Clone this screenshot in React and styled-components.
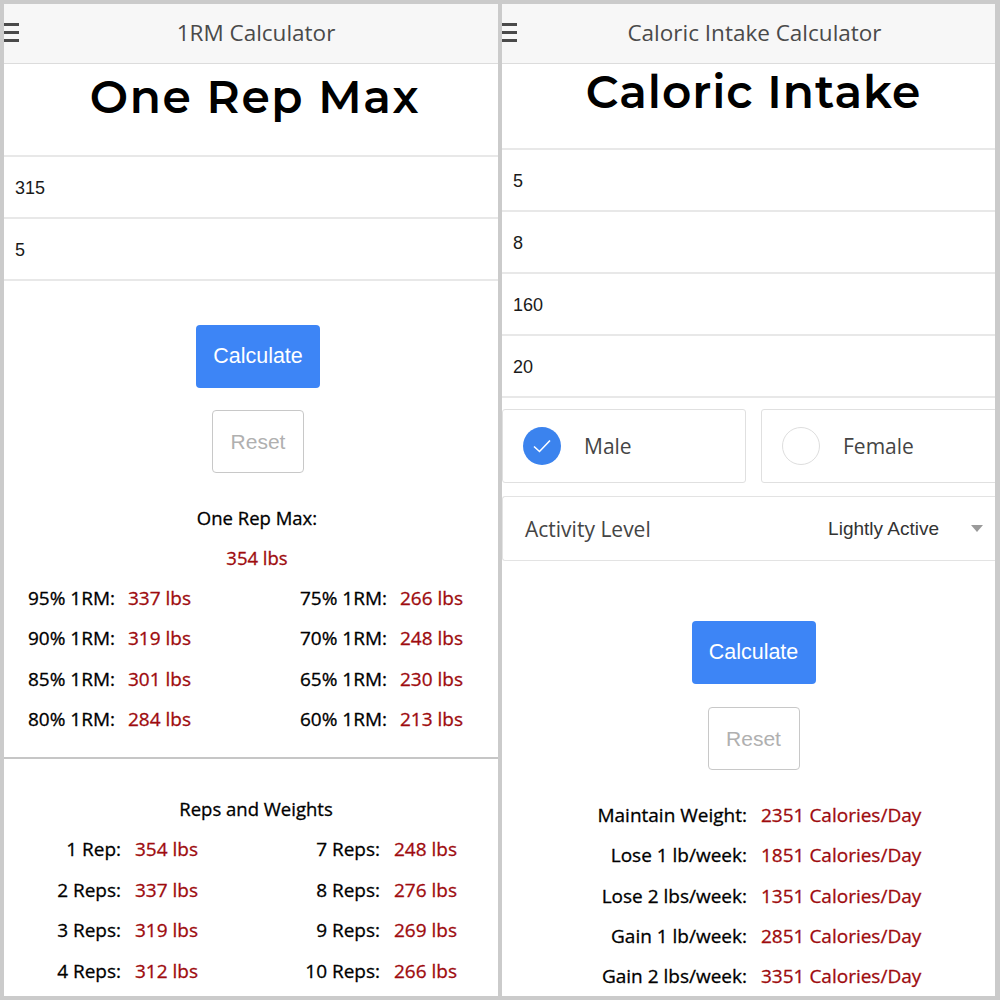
import React from "react";
import styled, { createGlobalStyle } from "styled-components";

const GlobalStyle = createGlobalStyle`
  html, body { margin: 0; padding: 0; background: #cbcbcb; }
  * { box-sizing: border-box; }
`;

const Frame = styled.div`
  width: 1000px;
  height: 1000px;
  padding: 4px 5px 4px 4px;
  display: grid;
  grid-template-columns: 494px 493px;
  column-gap: 4px;
  background: #cbcbcb;
`;

const Panel = styled.div`
  background: #fff;
  display: flex;
  flex-direction: column;
  overflow: hidden;
`;

const NavBar = styled.div`
  height: 60px;
  flex: none;
  background: #f7f7f7;
  border-bottom: 1px solid #dcdcdc;
  display: grid;
  grid-template-columns: 40px 1fr 40px;
  align-items: center;
`;

const Burger = styled.div`
  width: 15px;
  display: flex;
  flex-direction: column;
  gap: 5px;
  margin-top: -2px;
  span {
    display: block;
    height: 3px;
    background: #4a4a4a;
  }
`;

const NavTitle = styled.div`
  text-align: center;
  font-family: "Open Sans", sans-serif;
  font-size: 22.5px;
  color: #4a4a4a;
  margin-top: -3px;
  margin-left: ${(p) => p.$shift || 0}px;
`;

const PageTitle = styled.h1`
  margin: 0;
  height: ${(p) => p.$h}px;
  flex: none;
  display: flex;
  justify-content: center;
  align-items: flex-start;
  padding-top: ${(p) => p.$pt || 0}px;
  font-family: "Montserrat", "Noto Sans", sans-serif;
  font-weight: 600;
  font-size: 45.5px;
  letter-spacing: ${(p) => p.$ls || 1}px;
  color: #000;
  margin-left: ${(p) => p.$shift || 0}px;
`;

const Fields = styled.div`
  display: flex;
  flex-direction: column;
  border-bottom: 2px solid #e8e8e8;
`;

const FieldRow = styled.div`
  height: 62px;
  flex: none;
  border-top: 2px solid #e8e8e8;
  display: flex;
  align-items: center;
  padding-left: 11px;
  padding-top: 3px;
  font-family: "Liberation Sans", Arial, sans-serif;
  font-size: 18px;
  color: #1a1a1a;
`;

const ButtonStack = styled.div`
  display: flex;
  flex-direction: column;
  align-items: center;
  gap: ${(p) => p.$gap}px;
  margin-top: ${(p) => p.$mt}px;
  margin-left: ${(p) => p.$shift || 0}px;
`;

const PrimaryButton = styled.button`
  width: 124px;
  height: 63px;
  border: none;
  border-radius: 4px;
  background: #3d85f6;
  color: #fff;
  font-family: "Liberation Sans", Arial, sans-serif;
  font-size: 21.5px;
  padding: 0;
`;

const GhostButton = styled.button`
  width: 92px;
  height: 63px;
  border: 1.5px solid #c8c8c8;
  border-radius: 4px;
  background: #fff;
  color: #b0b0b0;
  font-family: "Liberation Sans", Arial, sans-serif;
  font-size: 21px;
  padding: 0;
`;

const ResultHeading = styled.div`
  text-align: center;
  font-family: "Open Sans", sans-serif;
  font-size: 18.5px;
  line-height: 40px;
  color: #000;
  -webkit-text-stroke: 0.3px currentColor;
  margin-top: ${(p) => p.$mt || 0}px;
  margin-left: ${(p) => p.$shift || 0}px;
`;

const MaxValue = styled(ResultHeading)`
  color: #9e0b0e;
`;

const ResultGrid = styled.div`
  display: grid;
  grid-template-columns: ${(p) => p.$cols};
  padding-left: ${(p) => p.$pl || 0}px;
  margin-top: ${(p) => p.$mt || 0}px;
  font-family: "Open Sans", sans-serif;
  font-size: 19px;
  line-height: ${(p) => p.$lh || 40.3}px;
  color: #000;
  -webkit-text-stroke: 0.3px currentColor;
  white-space: nowrap;
`;

const Label = styled.div`
  text-align: ${(p) => (p.$right ? "right" : "left")};
`;

const Value = styled.div`
  color: #9e0b0e;
  padding-left: ${(p) => p.$pl || 0}px;
`;

const Divider = styled.hr`
  margin: ${(p) => p.$mt}px 0 0;
  border: none;
  border-top: 2px solid #c6c6c6;
`;

const GenderRow = styled.div`
  display: grid;
  grid-template-columns: 244px 1fr;
  column-gap: 15px;
  margin-top: 11px;
  height: 74px;
  flex: none;
`;

const GenderBox = styled.div`
  border: 1.5px solid #e0e0e0;
  border-radius: 3px;
  display: flex;
  align-items: center;
  padding-left: 20px;
  gap: 23px;
  font-family: "Open Sans", sans-serif;
  font-size: 21px;
  color: #454545;
  margin-right: ${(p) => (p.$edge ? -3 : 0)}px;
`;

const Radio = styled.div`
  width: 38px;
  height: 38px;
  border-radius: 50%;
  flex: none;
  display: flex;
  align-items: center;
  justify-content: center;
  background: ${(p) => (p.$checked ? "#3b83ee" : "#fff")};
  border: ${(p) => (p.$checked ? "none" : "1.5px solid #dedede")};
`;

const SelectRow = styled.div`
  margin-top: 13px;
  height: 65px;
  flex: none;
  border: 1.5px solid #e3e3e3;
  border-right: none;
  border-radius: 3px 0 0 3px;
  display: flex;
  align-items: center;
  padding-left: 22px;
  padding-right: 12px;
`;

const SelectLabel = styled.div`
  flex: 1;
  font-family: "Open Sans", sans-serif;
  font-size: 21px;
  color: #454545;
`;

const SelectValue = styled.div`
  font-family: "Liberation Sans", Arial, sans-serif;
  font-size: 19px;
  color: #333;
  margin-right: 32px;
`;

const Caret = styled.div`
  width: 0;
  height: 0;
  border-left: 6px solid transparent;
  border-right: 6px solid transparent;
  border-top: 7px solid #9a9a9a;
`;

const pct = [
  ["95% 1RM:", "337 lbs", "75% 1RM:", "266 lbs"],
  ["90% 1RM:", "319 lbs", "70% 1RM:", "248 lbs"],
  ["85% 1RM:", "301 lbs", "65% 1RM:", "230 lbs"],
  ["80% 1RM:", "284 lbs", "60% 1RM:", "213 lbs"],
];

const reps = [
  ["1 Rep:", "354 lbs", "7 Reps:", "248 lbs"],
  ["2 Reps:", "337 lbs", "8 Reps:", "276 lbs"],
  ["3 Reps:", "319 lbs", "9 Reps:", "269 lbs"],
  ["4 Reps:", "312 lbs", "10 Reps:", "266 lbs"],
];

const cals = [
  ["Maintain Weight:", "2351 Calories/Day"],
  ["Lose 1 lb/week:", "1851 Calories/Day"],
  ["Lose 2 lbs/week:", "1351 Calories/Day"],
  ["Gain 1 lb/week:", "2851 Calories/Day"],
  ["Gain 2 lbs/week:", "3351 Calories/Day"],
];

function Nav({ title, shift }) {
  return (
    <NavBar>
      <Burger>
        <span />
        <span />
        <span />
      </Burger>
      <NavTitle $shift={shift}>{title}</NavTitle>
      <div />
    </NavBar>
  );
}

function Buttons({ mt, shift, gap }) {
  return (
    <ButtonStack $mt={mt} $shift={shift} $gap={gap}>
      <PrimaryButton>Calculate</PrimaryButton>
      <GhostButton>Reset</GhostButton>
    </ButtonStack>
  );
}

export default function App() {
  return (
    <>
      <GlobalStyle />
      <Frame>
        <Panel>
          <Nav title="1RM Calculator" shift={10} />
          <PageTitle $h={91} $pt={5} $shift={8} $ls={1.6}>One Rep Max</PageTitle>
          <Fields>
            <FieldRow>315</FieldRow>
            <FieldRow>5</FieldRow>
          </Fields>
          <Buttons mt={44} shift={14} gap={22} />
          <ResultHeading $mt={25} $shift={12}>One Rep Max:</ResultHeading>
          <MaxValue $shift={12}>354 lbs</MaxValue>
          <ResultGrid $cols="100px 172px 100px 1fr" $pl={24}>
            {pct.map((r) => (
              <React.Fragment key={r[0]}>
                <Label>{r[0]}</Label>
                <Value>{r[1]}</Value>
                <Label>{r[2]}</Label>
                <Value>{r[3]}</Value>
              </React.Fragment>
            ))}
          </ResultGrid>
          <Divider $mt={18} />
          <ResultHeading $mt={30} $shift={10}>Reps and Weights</ResultHeading>
          <ResultGrid $cols="117px 145px 114px 1fr" $lh={40.5}>
            {reps.map((r) => (
              <React.Fragment key={r[0]}>
                <Label $right>{r[0]}</Label>
                <Value $pl={14}>{r[1]}</Value>
                <Label $right>{r[2]}</Label>
                <Value $pl={14}>{r[3]}</Value>
              </React.Fragment>
            ))}
          </ResultGrid>
        </Panel>

        <Panel>
          <Nav title="Caloric Intake Calculator" shift={12} />
          <PageTitle $h={84} $pt={0} $shift={10} $ls={1}>Caloric Intake</PageTitle>
          <Fields>
            <FieldRow>5</FieldRow>
            <FieldRow>8</FieldRow>
            <FieldRow>160</FieldRow>
            <FieldRow>20</FieldRow>
          </Fields>
          <GenderRow>
            <GenderBox>
              <Radio $checked>
                <svg width="20" height="16" viewBox="0 0 20 16">
                  <path d="M2 8.5 L7.5 13.5 L18 2.5" fill="none" stroke="#fff" strokeWidth="1.6" />
                </svg>
              </Radio>
              Male
            </GenderBox>
            <GenderBox $edge>
              <Radio />
              Female
            </GenderBox>
          </GenderRow>
          <SelectRow>
            <SelectLabel>Activity Level</SelectLabel>
            <SelectValue>Lightly Active</SelectValue>
            <Caret />
          </SelectRow>
          <Buttons mt={60} shift={10} gap={23} />
          <ResultGrid $cols="245px 1fr" $mt={25} $lh={40.3}>
            {cals.map((r) => (
              <React.Fragment key={r[0]}>
                <Label $right>{r[0]}</Label>
                <Value $pl={14}>{r[1]}</Value>
              </React.Fragment>
            ))}
          </ResultGrid>
        </Panel>
      </Frame>
    </>
  );
}
